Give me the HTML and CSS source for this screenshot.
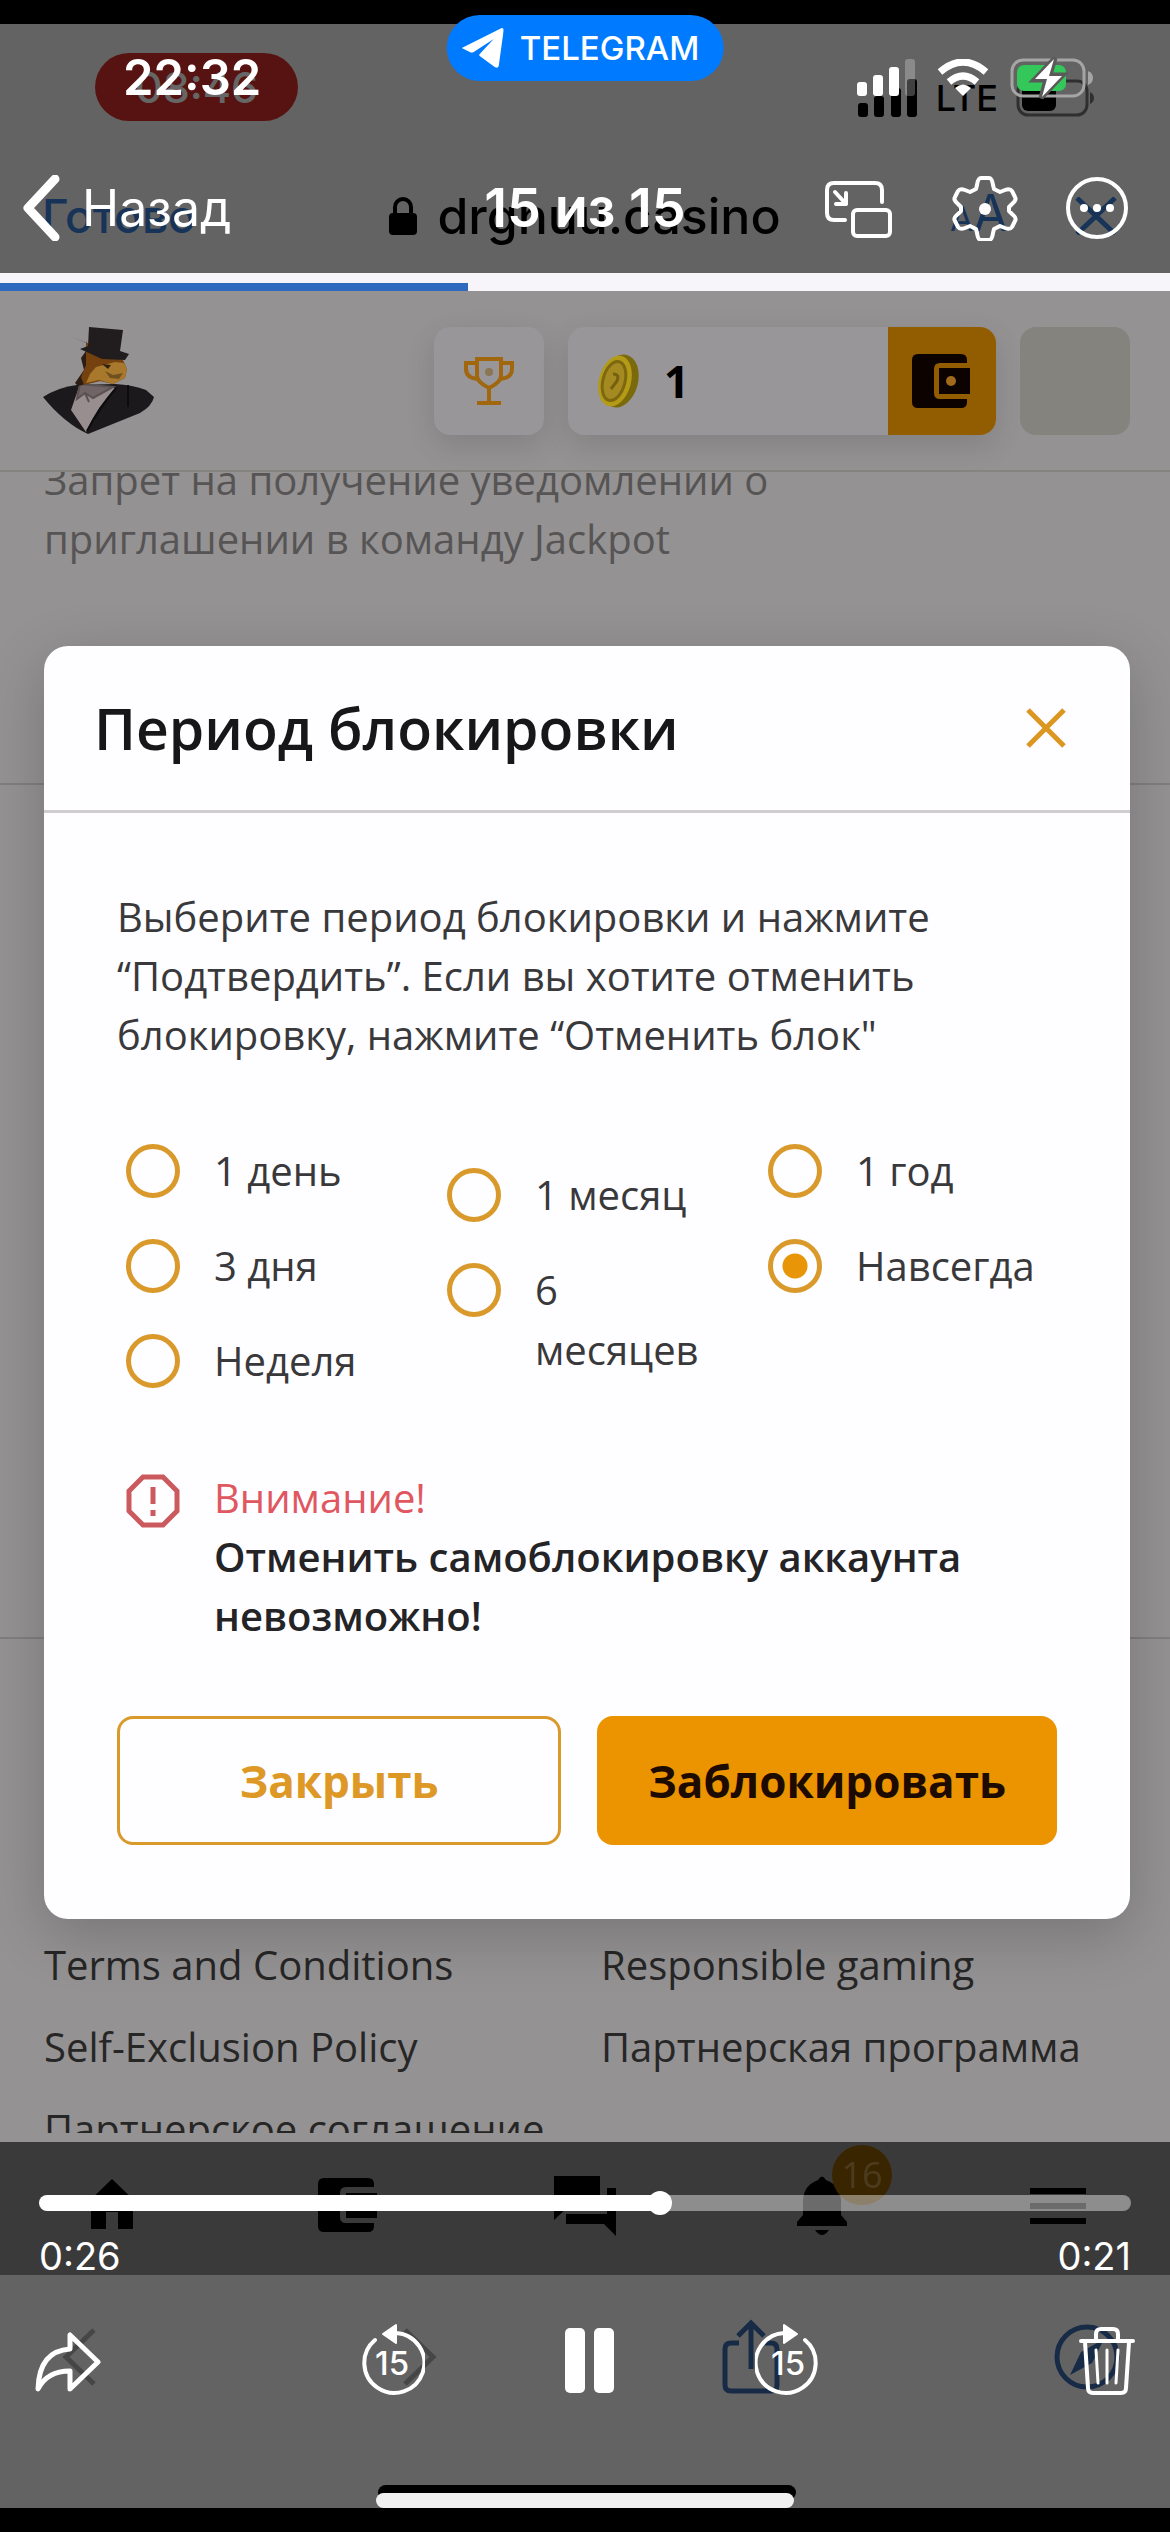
FILE: index.html
```html
<!DOCTYPE html>
<html lang="ru">
<head>
    <meta charset="UTF-8">
    <meta name="viewport" content="width=device-width, initial-scale=1.0">
    <title>15 из 15</title>
    <link rel="stylesheet" href="styles.css">
</head>
<body>
    <div class="screen">
        <!-- video frame -->
        <div class="video">
            <div class="browser-top">
                <div class="rec-status">
                    <span class="rec-time">08:46</span>
                    <div class="rec-signal">
                        <svg width="60" height="38" viewBox="0 0 60 38"><rect x="0" y="24" width="10" height="14" rx="3"/><rect x="16" y="17" width="10" height="21" rx="3"/><rect x="33" y="9" width="10" height="29" rx="3"/><rect x="49" y="0" width="10" height="38" rx="3"/></svg>
                        <span class="lte">LTE</span>
                        <svg width="78" height="38" viewBox="0 0 78 38"><rect x="2" y="2" width="69" height="34" rx="10" fill="none" stroke="#777" stroke-width="3"/><rect x="6" y="6" width="34" height="26" rx="6"/><path d="M74 13q4 2 4 6t-4 6z" fill="#777"/></svg>
                    </div>
                </div>
                <div class="address-row">
                    <a href="#" class="done-link">Готово</a>
                    <div class="address">
                        <svg width="28" height="38" viewBox="0 0 28 38"><path d="M6 17v-7a8 8 0 0 1 16 0v7" fill="none" stroke="#000" stroke-width="4"/><rect x="0" y="16" width="28" height="22" rx="4"/></svg>
                        <span>drgnuu.casino</span>
                    </div>
                    <div class="address-tools">
                        <span class="text-size"><small>A</small>A</span>
                        <svg width="44" height="38" viewBox="0 0 44 38"><path d="M3 1l38 36M41 1L3 37" fill="none" stroke="#3a82dc" stroke-width="5"/></svg>
                    </div>
                </div>
            </div>
            <div class="load-bar"><div class="load-value"></div></div>

            <header class="site-header">
                <svg class="logo" width="114" height="108" viewBox="0 0 114 108">
                    <path d="M1 70q16-10 34-12l38-1q18 1 31 6l8 7q-2 9-14 16L46 107Q22 96 1 70z" fill="#1b191b"/>
                    <path d="M38 57l-9 26 15 22Q56 78 74 61z" fill="#988d8f"/>
                    <path d="M38 57l-3 15 8-6 8 5 20-11zM43 66l4 9" fill="#706466" stroke="#5b5153" stroke-width="2"/>
                    <path d="M28 9l17 7-1 8-5 7 3 12-9 13 3 3 20-5-2-34z" fill="#2b1c14"/>
                    <path d="M44 14l6 11 31 8 4 9-2 9-12 6-13-3-16 4-3-8 5-12z" fill="#75420f"/>
                    <path d="M54 40l19-5 9 1 3 6-2 9-12 6-14-4-13 3 4-9z" fill="#a8782d"/>
                    <path d="M63 44l8 4 10-2-4 6-9-1z" fill="#71501f"/>
                    <path d="M60 37l9 1-3 4z" fill="#30200f"/>
                    <path d="M47 0l34 3-3 21 9 3-4 6-23-1-22-10 8-3z" fill="#211d1f"/>
                    <path d="M74 61Q58 80 45 104M86 58v22" stroke="#0d0c0d" stroke-width="2" fill="none"/>
                </svg>
                <div class="header-actions">
                    <button type="button" class="icon-card" aria-label="Турниры">
                        <svg width="50" height="48" viewBox="0 0 50 48" fill="none" stroke="#a0670f" stroke-width="4"><path d="M13 2h24v17q0 6-12 12-12-6-12-12zM13 6H2v6q0 9 12 10M37 6h11v6q0 9-12 10M25 31v13M13 46h24"/><circle cx="25" cy="15" r="4" fill="#8a7652" stroke="none"/></svg>
                    </button>
                    <div class="balance">
                        <div class="balance-value">
                            <svg width="44" height="58" viewBox="0 0 44 58"><ellipse cx="24" cy="29" rx="18" ry="27" transform="rotate(15 24 29)" fill="#7b6a0c"/><ellipse cx="19" cy="29" rx="16" ry="26" transform="rotate(15 19 29)" fill="#b39b18"/><ellipse cx="18" cy="29" rx="11" ry="20" transform="rotate(15 18 29)" fill="#a58a22" stroke="#7d670f" stroke-width="3"/><path d="M17 22q7 0 4 7l-6 8" fill="none" stroke="#75600f" stroke-width="3"/></svg>
                            <span>1</span>
                        </div>
                        <button type="button" class="wallet-btn" aria-label="Кошелёк">
                            <svg width="60" height="54" viewBox="0 0 60 54"><path d="M6 0h43q6 0 6 6v3H28q-6 0-6 6v24q0 6 6 6h27v3q0 6-6 6H6q-6 0-6-6V6q0-6 6-6z" fill="#0c0300"/><path d="M27 14h31v26H27z" fill="#0c0300"/><circle cx="39" cy="27" r="5" fill="#a0691c"/></svg>
                        </button>
                    </div>
                    <div class="avatar"></div>
                </div>
            </header>

            <main class="page">
                <section class="notice">
                    <p>Запрет на получение уведомлений о приглашении в команду Jackpot</p>
                </section>
                <section class="limits"></section>
                <footer class="footer-links">
                    <a href="#">Terms and Conditions</a>
                    <a href="#">Responsible gaming</a>
                    <a href="#">Self-Exclusion Policy</a>
                    <a href="#">Партнерская программа</a>
                    <a href="#">Партнерское соглашение</a>
                </footer>

                <form class="modal">
                    <div class="modal-header">
                        <h2>Период блокировки</h2>
                        <button type="button" class="modal-close" aria-label="Закрыть окно">
                            <svg width="40" height="40" viewBox="0 0 40 40"><path d="M2 2l36 36M38 2L2 38" fill="none" stroke="#dc9622" stroke-width="5"/></svg>
                        </button>
                    </div>
                    <div class="modal-body">
                        <p>Выберите период блокировки и нажмите “Подтвердить”. Если вы хотите отменить блокировку, нажмите “Отменить блок"</p>
                        <div class="periods">
                            <div class="period-col">
                                <label><input type="radio" name="period"><span>1 день</span></label>
                                <label><input type="radio" name="period"><span>3 дня</span></label>
                                <label><input type="radio" name="period"><span>Неделя</span></label>
                            </div>
                            <div class="period-col period-months">
                                <label><input type="radio" name="period"><span>1 месяц</span></label>
                                <label><input type="radio" name="period"><span>6 месяцев</span></label>
                            </div>
                            <div class="period-col">
                                <label><input type="radio" name="period"><span>1 год</span></label>
                                <label><input type="radio" name="period" checked><span>Навсегда</span></label>
                            </div>
                        </div>
                        <div class="warning">
                            <svg width="54" height="54" viewBox="0 0 54 54"><path d="M17 3h20l14 14v20L37 51H17L3 37V17z" fill="none" stroke="#cb5a5f" stroke-width="5"/><path d="M27 13v17M27 36v6" stroke="#cb5a5f" stroke-width="5"/></svg>
                            <div>
                                <span class="warning-title">Внимание!</span>
                                <strong>Отменить самоблокировку аккаунта невозможно!</strong>
                            </div>
                        </div>
                        <div class="modal-actions">
                            <button type="button" class="btn btn-outline">Закрыть</button>
                            <button type="button" class="btn btn-primary">Заблокировать</button>
                        </div>
                    </div>
                </form>
            </main>

            <nav class="site-nav">
                <a href="#" aria-label="Главная"><svg width="60" height="60" viewBox="0 0 60 60"><path d="M30 3l27 26h-6v24H36V36H24v17H9V29H3z"/></svg></a>
                <a href="#" aria-label="Касса"><svg width="60" height="60" viewBox="0 0 60 60"><path d="M6 2h44q6 0 6 6v3H28q-6 0-6 6v24q0 6 6 6h28v3q0 6-6 6H6q-6 0-6-6V8q0-6 6-6z"/><path d="M28 17h31v25H28z"/></svg></a>
                <a href="#" aria-label="Чат"><svg width="62" height="60" viewBox="0 0 62 60"><path d="M0 0h46v33H12L0 44zM53 12h9v48L50 48H12V38h41z"/></svg></a>
                <a href="#" class="nav-bell" aria-label="Уведомления"><svg width="60" height="60" viewBox="0 0 60 60"><path d="M26 4q4-7 8 0 14 5 15 20v15l6 7v4H5v-4l6-7V24Q12 9 26 4zM23 54h14q-7 10-14 0z"/></svg><span class="badge">16</span></a>
                <a href="#" aria-label="Меню"><svg width="60" height="60" viewBox="0 0 60 60"><path d="M2 12h56v6H2zM2 27h56v6H2zM2 42h56v6H2z"/></svg></a>
            </nav>

            <div class="browser-bottom">
                <svg width="64" height="70" viewBox="0 0 64 70"><path d="M44 8L16 35l28 27" fill="none" stroke="#b0b0b0" stroke-width="5"/></svg>
                <svg width="64" height="70" viewBox="0 0 64 70"><path d="M20 8l28 27-28 27" fill="none" stroke="#b0b0b0" stroke-width="5"/></svg>
                <svg width="64" height="76" viewBox="0 0 64 76" fill="none" stroke="#3a6cae" stroke-width="5"><path d="M20 24H12q-6 0-6 6v36q0 6 6 6h40q6 0 6-6V30q0-6-6-6h-8M32 50V4M19 17L32 4l13 13"/></svg>
                <svg width="66" height="66" viewBox="0 0 66 66"><circle cx="33" cy="33" r="30" fill="none" stroke="#3a6cae" stroke-width="5"/><path d="M50 15L38 39 16 51l11-23z" fill="#3a6cae"/></svg>
            </div>
        </div>

        <!-- player controls -->
        <div class="player">
            <div class="player-top">
                <div class="status-bar">
                    <span class="clock">22:32</span>
                    <div class="status-icons">
                        <svg width="59" height="38" viewBox="0 0 59 38" fill="#fff"><rect x="0" y="23" width="10" height="14" rx="3"/><rect x="16" y="16" width="10" height="21" rx="3"/><rect x="32" y="8" width="10" height="29" rx="3"/><rect x="48" y="0" width="10" height="37" rx="3" opacity=".25"/></svg>
                        <svg width="52" height="38" viewBox="0 0 52 38" fill="none" stroke="#fff" stroke-width="7"><path d="M3 13q23-20 46 0M12 23q14-12 28 0"/><path d="M18 29q8-7 16 0l-8 8z" fill="#fff" stroke="none"/></svg>
                        <svg width="84" height="42" viewBox="0 0 84 42"><rect x="2" y="3" width="72" height="36" rx="11" fill="none" stroke="#a5a5a5" stroke-width="3"/><path d="M78 14q5 2 5 7t-5 7z" fill="#a5a5a5"/><rect x="7" y="8" width="49" height="26" rx="7" fill="#34c759"/><path d="M45 1L24 23h12l-5 18 22-23H40z" fill="#fff" stroke="#5a5a5a" stroke-width="5"/><path d="M44 2L25 22h12l-5 18 20-21H39z" fill="#fff"/></svg>
                    </div>
                </div>
                <div class="player-nav">
                    <button type="button" class="back-btn">
                        <svg width="38" height="66" viewBox="0 0 38 66"><path d="M33 4L6 33l27 29" fill="none" stroke="#fff" stroke-width="9" stroke-linecap="round" stroke-linejoin="round"/></svg>
                        Назад
                    </button>
                    <h1>15 из 15</h1>
                    <div class="player-tools">
                        <button type="button" aria-label="Картинка в картинке"><svg width="68" height="66" viewBox="0 0 68 66" fill="none" stroke="#fff" stroke-width="4" stroke-linecap="round" stroke-linejoin="round"><path d="M58 27V15q0-7-7-7H10q-7 0-7 7v23q0 7 7 7h11"/><rect x="29" y="35" width="37" height="26" rx="4"/><path d="M11 17l11 12M22 18v11H12"/></svg></button>
                        <button type="button" aria-label="Настройки"><svg width="66" height="66" viewBox="0 0 66 66"><path d="M29 3h8q3 0 4 7l1 4 6 3 5-2q5-2 7 1l3 6q2 3-3 7l-3 3v4l3 3q5 4 3 7l-3 6q-2 3-7 1l-5-2-6 3-1 4q-1 7-4 7h-8q-3 0-4-7l-1-4-6-3-5 2q-5 2-7-1l-3-6q-2-3 3-7l3-3v-4l-3-3q-5-4-3-7l3-6q2-3 7-1l5 2 6-3 1-4q1-7 4-7z" fill="none" stroke="#fff" stroke-width="4" stroke-linejoin="round"/><circle cx="33" cy="34" r="6" fill="#fff"/></svg></button>
                        <button type="button" aria-label="Ещё"><svg width="66" height="66" viewBox="0 0 66 66"><circle cx="33" cy="33" r="29" fill="none" stroke="#fff" stroke-width="4"/><g fill="#fff"><circle cx="20" cy="33" r="4"/><circle cx="33" cy="33" r="4"/><circle cx="46" cy="33" r="4"/></g></svg></button>
                    </div>
                </div>
            </div>

            <div class="player-bottom">
                <input type="range" class="seek" min="0" max="100" value="57" aria-label="Позиция">
                <div class="times"><span>0:26</span><span>0:21</span></div>
                <div class="controls">
                    <button type="button" aria-label="Переслать"><svg width="66" height="70" viewBox="0 0 66 70"><path d="M35 9v14Q4 25 3 63q9-18 32-18v18l28-27z" fill="none" stroke="#fff" stroke-width="5" stroke-linejoin="round"/></svg></button>
                    <div class="play-group">
                        <button type="button" class="skip" aria-label="Назад на 15 секунд">
                            <svg width="66" height="80" viewBox="0 0 66 80"><path d="M16 19a30 30 0 1 0 21-7" fill="none" stroke="#fff" stroke-width="4" stroke-linecap="round"/><path d="M37 4v18L24 13z" fill="#fff" stroke="#fff" stroke-width="2" stroke-linejoin="round"/></svg>
                            <span>15</span>
                        </button>
                        <button type="button" aria-label="Пауза"><svg width="50" height="66" viewBox="0 0 50 66" fill="#fff"><rect x="0" y="0" width="20" height="65" rx="5"/><rect x="29" y="0" width="20" height="65" rx="5"/></svg></button>
                        <button type="button" class="skip" aria-label="Вперёд на 15 секунд">
                            <svg width="66" height="80" viewBox="0 0 66 80"><path d="M50 19a30 30 0 1 1-21-7" fill="none" stroke="#fff" stroke-width="4" stroke-linecap="round"/><path d="M29 4v18l13-9z" fill="#fff" stroke="#fff" stroke-width="2" stroke-linejoin="round"/></svg>
                            <span>15</span>
                        </button>
                    </div>
                    <button type="button" aria-label="Удалить"><svg width="56" height="68" viewBox="0 0 56 68" fill="none" stroke="#fff" stroke-width="4" stroke-linecap="round" stroke-linejoin="round"><path d="M2 14h52M17 13V7q0-5 5-5h12q5 0 5 5v6M6 15l3 46q0 5 5 5h28q5 0 5-5l3-46"/><path d="M17 23l2 33M28 23v33M39 23l-2 33" stroke-width="3"/></svg></button>
                </div>
                <div class="home-bar"></div>
            </div>
        </div>

        <a href="#" class="telegram-pill">
            <svg width="42" height="40" viewBox="0 0 42 40"><path d="M0 20L40 0q2 0 2 2l-5 36q-1 3-4 1L18 28q-1-1 0-2L32 11 12 24q-2 1-4 0z" fill="#fff"/></svg>
            TELEGRAM
        </a>
    </div>
</body>
</html>
```
FILE: styles.css
```css
body {
    margin: 0;
    background: #000;
    font-family: "Open Sans", Arial, sans-serif;
}

button {
    padding: 0;
    border: none;
    background: none;
    color: inherit;
    font-family: inherit;
    cursor: pointer;
}

svg {
    display: block;
    flex-shrink: 0;
}

a {
    color: inherit;
    text-decoration: none;
}

.screen {
    position: relative;
    padding: 24px 0;
    background: #000;
}

/* Recorded browser */
.browser-top {
    padding: 29px 42px 27px;
    background: #f7f7f7;
    font-family: Inter, Arial, sans-serif;
}

.rec-status {
    display: flex;
    justify-content: space-between;
    align-items: center;
    padding: 0 34px 0 53px;
}

.rec-time {
    padding: 0 40px;
    border-radius: 34px;
    background: #d7302b;
    color: #fff;
    font-size: 43px;
    font-weight: 500;
    line-height: 68px;
}

.rec-signal {
    display: flex;
    align-items: center;
    gap: 18px;
    padding-top: 22px;
}

.lte {
    font-size: 36px;
    font-weight: 500;
    line-height: 38px;
}

.address-row {
    display: grid;
    grid-template-columns: 1fr auto 1fr;
    align-items: center;
    padding-top: 64px;
    font-size: 50px;
    line-height: 62px;
}

.done-link,
.text-size {
    color: #3a82dc;
}

.done-link {
    font-size: 46px;
    font-weight: 500;
}

.address {
    display: flex;
    align-items: center;
    gap: 20px;
    font-weight: 500;
}

.address-tools {
    display: flex;
    justify-content: flex-end;
    align-items: center;
    gap: 66px;
    padding-right: 10px;
}

.text-size {
    display: flex;
    align-items: baseline;
    line-height: 50px;
}

.text-size small {
    font-size: 34px;
}

.load-bar {
    height: 8px;
    padding-top: 9px;
    background: #f7f5fa;
}

.load-value {
    width: 40%;
    height: 8px;
    background: #2f6abf;
}

/* Site */
.site-header {
    display: flex;
    justify-content: space-between;
    align-items: center;
    padding: 36px 40px 35px 42px;
    border-bottom: 2px solid #868480;
    background: #949292;
}

.header-actions {
    display: flex;
    gap: 24px;
}

.icon-card,
.balance,
.avatar {
    height: 108px;
    border-radius: 16px;
}

.icon-card,
.balance {
    background: #989699;
    box-shadow: 0 10px 30px rgba(0, 0, 0, 0.12);
}

.icon-card,
.avatar {
    width: 110px;
}

.icon-card,
.balance,
.balance-value,
.wallet-btn {
    display: flex;
    align-items: center;
}

.icon-card,
.wallet-btn {
    justify-content: center;
}

.balance {
    overflow: hidden;
}

.balance-value {
    gap: 24px;
    width: 292px;
    padding-left: 28px;
    font-size: 44px;
    font-weight: 700;
}

.wallet-btn {
    width: 108px;
    height: 108px;
    background: #925d00;
}

.avatar {
    background: #84837e;
}

.page {
    position: relative;
    overflow: hidden;
    background: #949292;
    font-size: 40px;
    line-height: 59px;
}

.notice {
    display: flow-root;
    height: 311px;
    border-bottom: 2px solid #807e7e;
}

.notice p {
    max-width: 800px;
    margin: -22px 44px 0;
    color: #565454;
}

.limits {
    height: 852px;
    border-bottom: 2px solid #807e7e;
}

.footer-links {
    display: grid;
    grid-template-columns: 1fr 1fr;
    column-gap: 32px;
    row-gap: 23px;
    height: 198px;
    padding: 296px 44px 0;
    color: #272626;
}

.footer-links a {
    white-space: nowrap;
}

.site-nav {
    display: flex;
    justify-content: space-between;
    padding: 43px 82px 39px;
    background: #949292;
}

.nav-bell {
    position: relative;
}

.badge {
    position: absolute;
    top: -31px;
    left: 40px;
    width: 60px;
    border-radius: 30px;
    background: #905c00;
    color: #bd934d;
    font-size: 36px;
    line-height: 60px;
    text-align: center;
}

.browser-bottom {
    display: flex;
    justify-content: space-between;
    align-items: center;
    padding: 44px 50px 113px;
    background: #f7f7f7;
}

/* Modal */
.modal {
    position: absolute;
    top: 174px;
    left: 44px;
    right: 40px;
    border-radius: 24px;
    background: #fefdff;
    box-shadow: 0 16px 60px rgba(0, 0, 0, 0.2);
    color: #39383a;
}

.modal-header {
    display: flex;
    justify-content: space-between;
    align-items: center;
    padding: 42px 64px 42px 50px;
    border-bottom: 3px solid #cfcdce;
}

.modal-header h2 {
    margin: 0;
    color: #171618;
    font-size: 57px;
    font-weight: 600;
    line-height: 80px;
}

.modal-body {
    padding: 74px 73px;
}

.modal-body p {
    margin: 0;
}

.periods {
    display: grid;
    grid-template-columns: repeat(3, 1fr);
    column-gap: 44px;
    margin: 77px 12px 77px 9px;
}

.period-col {
    display: flex;
    flex-direction: column;
    gap: 35px;
}

.period-months {
    padding-top: 24px;
}

.period-col label {
    display: flex;
    gap: 34px;
    line-height: 60px;
}

.period-col input {
    appearance: none;
    flex-shrink: 0;
    width: 54px;
    height: 54px;
    margin: 3px 0 0;
    border: 5px solid #d99a2b;
    border-radius: 50%;
}

.period-col input:checked {
    background: radial-gradient(circle, #e89608 12px, transparent 13px);
}

.warning {
    display: flex;
    gap: 34px;
    padding-left: 9px;
}

.warning svg {
    margin-top: 6px;
}

.warning-title {
    display: block;
    color: #e0575f;
}

.warning strong {
    color: #242325;
    font-weight: 600;
}

.modal-actions {
    display: grid;
    grid-template-columns: 29fr 30fr;
    gap: 36px;
    margin-top: 71px;
}

.btn {
    height: 129px;
    border-radius: 16px;
    font-size: 44px;
    font-weight: 700;
}

.btn-outline {
    border: 3px solid #d99a2b;
    color: #dd9826;
}

.btn-primary {
    background: #ec9300;
    color: #1d0b00;
}

/* Player */
.player {
    position: absolute;
    top: 24px;
    right: 0;
    bottom: 24px;
    left: 0;
    display: flex;
    flex-direction: column;
    justify-content: space-between;
    color: #fff;
    font-family: Inter, Arial, sans-serif;
}

.player-top,
.player-bottom {
    background: rgba(0, 0, 0, 0.6);
}

.player-top {
    padding: 24px 22px 32px;
}

.status-bar {
    display: flex;
    justify-content: space-between;
    align-items: center;
    padding: 0 54px 0 101px;
}

.clock {
    font-size: 49px;
    font-weight: 600;
    line-height: 60px;
}

.status-icons {
    display: flex;
    align-items: center;
    gap: 21px;
}

.player-nav {
    display: grid;
    grid-template-columns: 1fr auto 1fr;
    align-items: center;
    padding-top: 67px;
}

.back-btn {
    display: flex;
    align-items: center;
    gap: 22px;
    font-size: 50px;
}

.player-nav h1 {
    margin: 0;
    font-size: 54px;
    font-weight: 600;
    line-height: 66px;
}

.player-tools {
    display: flex;
    justify-content: flex-end;
    gap: 60px;
    padding-right: 18px;
}

.player-tools button:last-child {
    margin-left: -14px;
}

.player-bottom {
    padding: 49px 39px 0;
}

.seek {
    appearance: none;
    display: block;
    width: 100%;
    height: 24px;
    margin: 0;
    background: none;
}

.seek::-webkit-slider-runnable-track {
    height: 16px;
    border-radius: 8px;
    background: linear-gradient(to right, #fff 57%, rgba(255, 255, 255, 0.42) 57%);
}

.seek::-webkit-slider-thumb {
    appearance: none;
    width: 24px;
    height: 24px;
    margin-top: -4px;
    border-radius: 50%;
    background: #fff;
}

.times {
    display: flex;
    justify-content: space-between;
    padding-top: 18px;
    font-size: 38px;
    line-height: 46px;
}

.controls {
    display: flex;
    justify-content: space-between;
    align-items: center;
    padding: 42px 0 92px;
    margin: 0 -4px;
}

.play-group {
    display: flex;
    align-items: center;
    gap: 140px;
}

.skip {
    display: grid;
    place-items: center;
}

.skip svg,
.skip span {
    grid-area: 1 / 1;
}

.skip span {
    padding-top: 4px;
    font-size: 33px;
    font-weight: 500;
}

.home-bar {
    width: 418px;
    height: 15px;
    margin: 0 auto;
    border-radius: 8px;
    background: #f1f1f1;
    box-shadow: 2px -8px 0 #000;
}

.telegram-pill {
    position: absolute;
    top: 15px;
    left: 50%;
    display: flex;
    align-items: center;
    gap: 16px;
    padding: 0 24px 0 15px;
    border-radius: 33px;
    background: #007bff;
    color: #fff;
    font-family: Inter, Arial, sans-serif;
    font-size: 33px;
    font-weight: 500;
    line-height: 66px;
    transform: translateX(-50%);
}
```
